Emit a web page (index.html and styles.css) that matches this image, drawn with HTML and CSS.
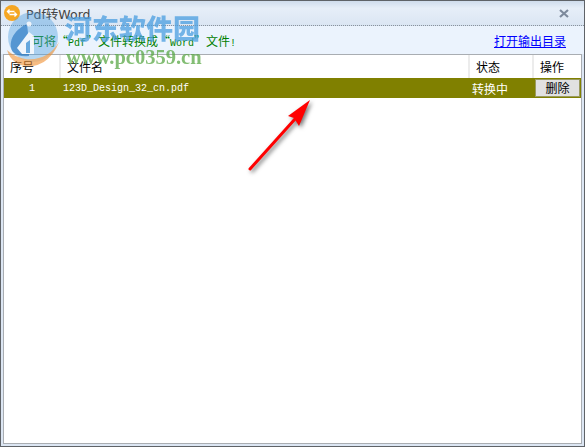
FILE: index.html
```html
<!DOCTYPE html>
<html lang="zh-CN">

<head>
    <meta charset="UTF-8">
    <title>Pdf转Word</title>
    <link rel="stylesheet" href="styles.css">
</head>

<body>
    <div class="window">
        <div class="titlebar">
            <svg class="app-icon" width="16" height="16" viewBox="0 0 16 16">
                <circle cx="8" cy="8" r="8" fill="#f5a623" />
                <path d="M3.5 6.5h7M5.5 4.5l-2 2 2 2" fill="none" stroke="#fff" stroke-width="1.4" />
                <path d="M12.5 9.5h-7M10.5 7.5l2 2-2 2" fill="none" stroke="#fff" stroke-width="1.4" />
            </svg>
            <span class="title">Pdf转Word</span>
            <svg class="close" width="10" height="9" viewBox="0 0 10 9">
                <path d="M1 1l8 7M9 1l-8 7" stroke="#7d8a9c" stroke-width="2.2" fill="none" />
            </svg>
        </div>

        <div class="toolbar">
            <span class="hint">可将<span class="quote-l">“</span><span class="latin">Pdf</span><span class="quote-r">”</span>文件转换成<span class="quote-l">“</span><span class="latin">Word</span><span class="quote-r">”</span>文件<span class="latin">!</span></span>
            <a class="open-link" href="#">打开输出目录</a>
        </div>

        <div class="list">
            <div class="row head">
                <div class="col-no">序号</div>
                <div class="col-name">文件名</div>
                <div class="col-state">状态</div>
                <div class="col-op">操作</div>
            </div>
            <div class="row item">
                <div class="col-no latin">1</div>
                <div class="col-name latin">123D_Design_32_cn.pdf</div>
                <div class="col-state">转换中</div>
                <div class="col-op"><button class="del-btn">删除</button></div>
            </div>
        </div>

        <!-- site watermark over the top left corner -->
        <div class="watermark">
            <svg class="wm-logo" width="58" height="58" viewBox="0 0 58 58">
                <circle cx="28" cy="25" r="25" fill="#4f9fde" opacity="0.55" />
                <path d="M2 38C8 60 42 62 54 30 44 48 20 54 2 38z" fill="#f09030" opacity="0.8" />
                <path d="M22 12C8 18 2 32 8 40c4 4 10 5 16 4V30z" fill="#2478c4" />
                <path d="M12 36L24 20l5 4v18H17z" fill="#f4f8fc" />
                <path d="M21 31l4-3v13h-4z" fill="#3b8fd4" />
                <circle cx="24" cy="12" r="2.5" fill="#f4f8fc" />
            </svg>
            <div class="wm-name">河东软件园</div>
            <div class="wm-url">www.pc0359.cn</div>
        </div>

        <!-- red arrow annotation -->
        <svg class="arrow" width="72" height="84" viewBox="0 0 72 84">
            <path d="M6 77L51 27" stroke="#f00" stroke-width="3" stroke-linecap="round" />
            <path d="M66 8L44 24l6 2 5 8z" fill="#f00" />
        </svg>
    </div>
</body>

</html>
```

FILE: styles.css
```css
body {
    margin: 0;
    font-family: "Noto Sans CJK SC", "Liberation Sans", sans-serif;
    font-size: 12px;
}

.window {
    position: relative;
    box-sizing: border-box;
    width: 585px;
    height: 447px;
    display: flex;
    flex-direction: column;
    overflow: hidden;
    border: 1px solid #5f6368;
    background-color: #dce6f3;
}

.titlebar {
    display: flex;
    align-items: center;
    height: 24px;
    padding: 0 15px 0 3px;
    background: linear-gradient(#cfdcec, #e6eef8 30%, #dbe6f3);
    border-bottom: 1px dotted #8a929c;
}

.app-icon {
    margin-right: 6px;
}

.title {
    font-family: "DejaVu Sans", "Noto Sans CJK SC", sans-serif;
    font-size: 12.5px;
    color: #444;
}

.close {
    margin-left: auto;
}

.toolbar {
    display: flex;
    align-items: center;
    justify-content: space-between;
    height: 28px;
    padding: 0 18px 0 31px;
    background-color: #ebf3fd;
}

.hint {
    color: #008000;
}

.quote-l,
.quote-r {
    display: inline-block;
    width: 12px;
}

.quote-l {
    text-align: right;
}

.latin {
    font-family: "Liberation Mono", monospace;
    font-size: 10px;
}

.open-link {
    color: #0000ff;
}

.list {
    flex: 1;
    margin: 0 2px 2px;
    background-color: #fff;
    border: 1px solid #a9adb2;
}

.row {
    display: flex;
    align-items: center;
}

.head {
    height: 23px;
    color: #000;
}

.head > div {
    height: 100%;
    display: flex;
    align-items: center;
    border-right: 2px solid #ececec;
    box-sizing: border-box;
}

.head > div:last-child {
    border-right: none;
}

.item {
    height: 20px;
    background-color: #808000;
    color: #fff;
}

.col-no {
    width: 57px;
    padding-left: 6px;
    box-sizing: border-box;
}

.item .col-no {
    padding-left: 25px;
}

.col-name {
    flex: 1;
    padding-left: 6px;
}

.item .col-name {
    padding-left: 2px;
}

.col-state {
    width: 64px;
    padding-left: 6px;
    box-sizing: border-box;
}

.item .col-state {
    padding-left: 2px;
}

.col-op {
    width: 47px;
    padding-left: 6px;
    box-sizing: border-box;
}

.item .col-op {
    padding-left: 1px;
}

.del-btn {
    display: block;
    width: 45px;
    height: 18px;
    padding: 0;
    border: 1px solid #9a9a60;
    background-color: #e1e1e1;
    color: #000;
    font-family: inherit;
    font-size: 12px;
    line-height: 16px;
}

.watermark {
    position: absolute;
    left: 4px;
    top: 11px;
    width: 200px;
    height: 60px;
}

.wm-logo {
    position: absolute;
    left: 0;
    top: 0;
    opacity: 0.75;
}

.wm-name {
    position: absolute;
    left: 60px;
    top: -2px;
    font-family: "Noto Sans CJK SC", serif;
    font-size: 27px;
    line-height: 36px;
    font-weight: 900;
    color: #4a9ee0;
    opacity: 0.75;
}

.wm-url {
    position: absolute;
    left: 61px;
    top: 34px;
    font-family: "Liberation Serif", serif;
    font-size: 20.5px;
    line-height: 22px;
    font-weight: bold;
    color: #5aa846;
    opacity: 0.75;
}

.arrow {
    position: absolute;
    left: 243px;
    top: 91px;
    filter: drop-shadow(2px 2px 2px rgba(0, 0, 0, 0.55));
}
```
